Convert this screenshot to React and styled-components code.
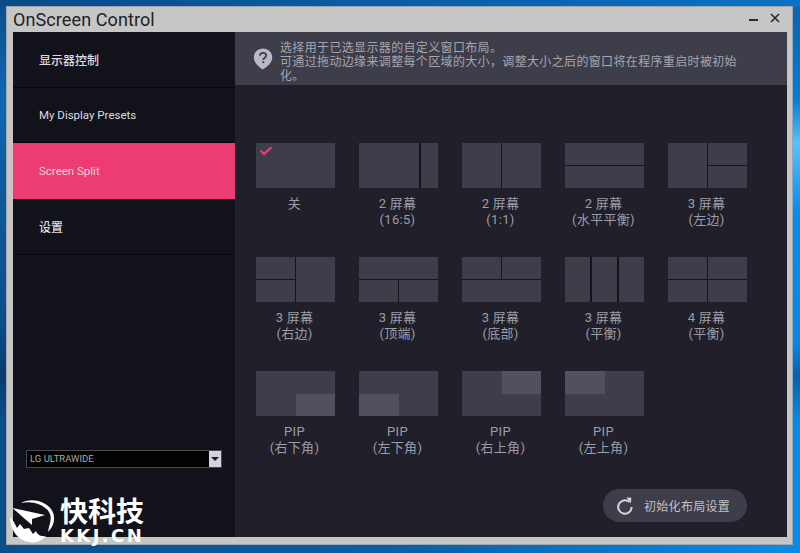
import React from "react";
import styled, { createGlobalStyle } from "styled-components";

const Global = createGlobalStyle`
  html, body {
    margin: 0;
    padding: 0;
    background: #0a5a9e;
  }
  * {
    box-sizing: border-box;
  }
`;

const FONT = `Roboto, "Noto Sans CJK SC", "Noto Sans", sans-serif`;

const Desktop = styled.div`
  position: relative;
  width: 800px;
  height: 553px;
  overflow: hidden;
  padding: 6px 7px 8px 6px;
  font-family: ${FONT};
  background:
    linear-gradient(to right, #0a4f8c, #0a5fa8 50%, #0a8be8) left bottom / 100% 8px no-repeat,
    linear-gradient(to right, #0a4a88, #0a62ae 60%, #0a72c4) left top / 100% 7px no-repeat,
    linear-gradient(to bottom, #0a4f8c 0%, #0f68b4 18%, #0c5ca0 32%, #0a4f8e 58%, #083c6e 68%, #0a4f8e 76%, #0a4f8c 100%) left top / 50% 100% no-repeat,
    linear-gradient(to bottom, #0a62ae 0%, #0a7cd0 18%, #5cc0fa 26%, #0a8ce8 38%, #0a88e0 62%, #0a5fa8 68%, #0a8ae4 76%, #0a8be8 100%) right top / 50% 100% no-repeat;
`;

const Window = styled.div`
  height: 100%;
  display: flex;
  flex-direction: column;
  background: #c6c6c6;
  border: 1px solid #9fa6ad;
  padding: 0 5px 7px 6px;
`;

const TitleBar = styled.div`
  height: 25px;
  flex: none;
  display: flex;
  align-items: center;
  justify-content: space-between;
`;

const Title = styled.div`
  font-size: 18px;
  font-weight: 400;
  color: #222;
  line-height: 25px;
  letter-spacing: 0.1px;
`;

const WinButtons = styled.div`
  display: flex;
  align-items: center;
  gap: 12px;
  padding-right: 7px;
  margin-top: -4px;
`;

const Body = styled.div`
  flex: 1;
  display: flex;
  min-height: 0;
`;

const Sidebar = styled.div`
  width: 222px;
  flex: none;
  display: flex;
  flex-direction: column;
  background: #12121a;
`;

const NavItem = styled.div`
  height: 55.7px;
  flex: none;
  display: flex;
  align-items: center;
  padding-left: 26px;
  font-size: ${(props) => (props.$strong ? "12px" : "11.5px")};
  color: ${(props) => (props.$active ? "#f5cfd9" : "#dcdce0")};
  font-weight: ${(props) => (props.$strong ? 500 : 400)};
  background: ${(props) => (props.$active ? "#ed3c72" : "transparent")};
  border-bottom: 1px solid ${(props) => (props.$active ? "#ed3c72" : "#06060a")};
`;

const SelectWrap = styled.div`
  margin: auto 13px 69px 13px;
  height: 18px;
  display: flex;
  align-items: stretch;
  background: #020203;
  border: 1px solid #4a4a4e;
`;

const SelectText = styled.div`
  flex: 1;
  font-size: 9.5px;
  line-height: 16px;
  padding-left: 3px;
  color: #a9a9ab;
`;

const SelectArrow = styled.div`
  width: 12px;
  background: #d3d3e0;
  display: flex;
  align-items: center;
  justify-content: center;

  &::after {
    content: "";
    border-left: 4px solid transparent;
    border-right: 4px solid transparent;
    border-top: 4px solid #1a1a22;
  }
`;

const Main = styled.div`
  flex: 1;
  min-width: 0;
  display: flex;
  flex-direction: column;
  background: #201f2a;
`;

const Notice = styled.div`
  height: 53px;
  flex: none;
  display: flex;
  align-items: center;
  background: #3e3d4a;
  padding-left: 18px;
`;

const NoticeText = styled.div`
  margin: 6px 0 0 7px;
  font-size: 12px;
  letter-spacing: 0.35px;
  line-height: 14px;
  color: #a6a6af;
`;

const Grid = styled.div`
  display: grid;
  grid-template-columns: repeat(5, 80px);
  grid-auto-rows: 114px;
  column-gap: 23px;
  padding: 58px 0 0 21px;
`;

const Cell = styled.div`
  display: flex;
  flex-direction: column;
  align-items: center;
`;

const Tile = styled.div`
  position: relative;
  width: 79px;
  height: 45px;
  margin-right: 1px;
  display: grid;
  grid-template-columns: ${(props) => props.$cols || "1fr"};
  grid-template-rows: ${(props) => props.$rows || "1fr"};
  gap: ${(props) => (props.$pip ? "0" : "1.5px")};
  background: ${(props) => (props.$pip ? "#3e3d4a" : "#14141b")};
`;

const Pane = styled.div`
  grid-area: ${(props) => props.$area || "auto"};
  background: ${(props) => (props.$inset ? "#50505f" : "#3e3d4a")};
`;

const Check = styled.svg`
  position: absolute;
  left: 3px;
  top: 3px;
`;

const Label = styled.div`
  margin-top: 8px;
  padding-right: 3px;
  font-size: 13px;
  letter-spacing: 0.3px;
  line-height: 16px;
  text-align: center;
  color: #9d9da5;
`;

const Footer = styled.div`
  display: flex;
  justify-content: flex-end;
  padding: 0 40px 0 0;
  margin-top: auto;
  margin-bottom: 15px;
`;

const ResetButton = styled.div`
  width: 144px;
  height: 33px;
  border-radius: 17px;
  background: #3e3d4a;
  display: flex;
  align-items: center;
  padding-left: 13px;
  gap: 10px;
  font-size: 12px;
  letter-spacing: 0.3px;
  color: #c2c2c8;
`;

const Watermark = styled.div`
  position: absolute;
  left: 10px;
  top: 498px;
  display: flex;
  color: #fff;
  gap: 4px;
`;

const MarkText = styled.div`
  display: flex;
  flex-direction: column;
  align-items: flex-start;
`;

const MarkCn = styled.div`
  font-size: 28px;
  line-height: 30px;
  font-weight: 700;
`;

const MarkEn = styled.div`
  margin-top: 1px;
  font-family: "DejaVu Sans", sans-serif;
  font-size: 18px;
  line-height: 14px;
  font-weight: 700;
  letter-spacing: 2.4px;
`;

const tiles = [
  { label: ["关"], panes: [""], check: true },
  { label: ["2 屏幕", "(16:5)"], cols: "60px 1fr", panes: ["", ""] },
  { label: ["2 屏幕", "(1:1)"], cols: "1fr 1fr", panes: ["", ""] },
  { label: ["2 屏幕", "(水平平衡)"], rows: "1fr 1fr", panes: ["", ""] },
  { label: ["3 屏幕", "(左边)"], cols: "1fr 1fr", rows: "1fr 1fr", panes: ["1 / 1 / 3 / 2", "", ""] },
  { label: ["3 屏幕", "(右边)"], cols: "1fr 1fr", rows: "1fr 1fr", panes: ["1 / 2 / 3 / 3", "", ""] },
  { label: ["3 屏幕", "(顶端)"], cols: "1fr 1fr", rows: "1fr 1fr", panes: ["1 / 1 / 2 / 3", "", ""] },
  { label: ["3 屏幕", "(底部)"], cols: "1fr 1fr", rows: "1fr 1fr", panes: ["2 / 1 / 3 / 3", "", ""] },
  { label: ["3 屏幕", "(平衡)"], cols: "1fr 1fr 1fr", panes: ["", "", ""] },
  { label: ["4 屏幕", "(平衡)"], cols: "1fr 1fr", rows: "1fr 1fr", panes: ["", "", "", ""] },
  { label: ["PIP", "(右下角)"], pip: "2 / 2" },
  { label: ["PIP", "(左下角)"], pip: "2 / 1" },
  { label: ["PIP", "(右上角)"], pip: "1 / 2" },
  { label: ["PIP", "(左上角)"], pip: "1 / 1" },
];

const HelpIcon = () => (
  <svg width="20" height="22" viewBox="0 0 20 22">
    <path d="M10 0.5C4.8 0.5 0.8 4.5 0.8 9.6c0 5.2 5 9.2 9.2 11.9 4.2-2.7 9.2-6.7 9.2-11.9C19.2 4.5 15.2 0.5 10 0.5z" fill="#b9b8c6" />
    <path d="M6.9 7.7c0.2-1.8 1.5-2.8 3.2-2.8 1.8 0 3.1 1.1 3.1 2.6 0 2.3-2.9 2.3-2.9 4.6" fill="none" stroke="#3e3d4a" strokeWidth="1.8" />
    <rect x="9.3" y="13.2" width="1.9" height="1.9" fill="#3e3d4a" />
  </svg>
);

const ResetIcon = () => (
  <svg width="18" height="20" viewBox="0 0 18 20">
    <path d="M13.2 5.9A6.7 6.7 0 1 0 15.6 11" fill="none" stroke="#d6d6dc" strokeWidth="2" />
    <path d="M10.4 1.4l5 0.4-0.6 5.8z" fill="#d6d6dc" />
  </svg>
);

const LogoMark = () => (
  <svg width="46" height="46" viewBox="0 0 46 46">
    <path d="M11 5C20 0 34 2 41 11c5 7 4 16-3 23 1-7 4-12 2-18C37 8 24 2 11 5z" fill="#fff" />
    <path d="M2.5 10L35 17l-13 4v6l-7-6z" fill="#fff" />
    <path d="M0 19c0 11 6 21 15 24 8 3 16 1 21-5-6 1-9-2-10-5l-3 3-4-6-5 1-4-5-3 4-3-6z" fill="#fff" />
  </svg>
);

const App = () => {
  return (
    <Desktop>
      <Global />
      <Window>
        <TitleBar>
          <Title>OnScreen Control</Title>
          <WinButtons>
            <svg width="9" height="9" viewBox="0 0 9 9">
              <rect x="0" y="6" width="9" height="2" fill="#2c2c2c" />
            </svg>
            <svg width="10" height="10" viewBox="0 0 10 10">
              <path d="M1 1l8 8M9 1l-8 8" stroke="#2c2c2c" strokeWidth="1.7" />
            </svg>
          </WinButtons>
        </TitleBar>
        <Body>
          <Sidebar>
            <NavItem $strong>显示器控制</NavItem>
            <NavItem>My Display Presets</NavItem>
            <NavItem $active>Screen Split</NavItem>
            <NavItem $strong>设置</NavItem>
            <SelectWrap>
              <SelectText>LG ULTRAWIDE</SelectText>
              <SelectArrow />
            </SelectWrap>
          </Sidebar>
          <Main>
            <Notice>
              <HelpIcon />
              <NoticeText>
                选择用于已选显示器的自定义窗口布局。
                <br />
                可通过拖动边缘来调整每个区域的大小，调整大小之后的窗口将在程序重启时被初始
                <br />
                化。
              </NoticeText>
            </Notice>
            <Grid>
              {tiles.map((tile, i) => (
                <Cell key={i}>
                  {tile.pip ? (
                    <Tile $pip $cols="1fr 1fr" $rows="1fr 1fr">
                      <Pane $inset $area={tile.pip} />
                    </Tile>
                  ) : (
                    <Tile $cols={tile.cols} $rows={tile.rows}>
                      {tile.panes.map((area, j) => (
                        <Pane key={j} $area={area} />
                      ))}
                      {tile.check && (
                        <Check width="14" height="10" viewBox="0 0 14 10">
                          <path d="M1.5 4.5l3.6 3.4 7.4-6.6" fill="none" stroke="#ed3c72" strokeWidth="2.2" />
                        </Check>
                      )}
                    </Tile>
                  )}
                  <Label>
                    {tile.label[0]}
                    {tile.label[1] && <br />}
                    {tile.label[1]}
                  </Label>
                </Cell>
              ))}
            </Grid>
            <Footer>
              <ResetButton>
                <ResetIcon />
                初始化布局设置
              </ResetButton>
            </Footer>
          </Main>
        </Body>
      </Window>
      <Watermark>
        <LogoMark />
        <MarkText>
          <MarkCn>快科技</MarkCn>
          <MarkEn>KKJ.CN</MarkEn>
        </MarkText>
      </Watermark>
    </Desktop>
  );
};

export default App;
